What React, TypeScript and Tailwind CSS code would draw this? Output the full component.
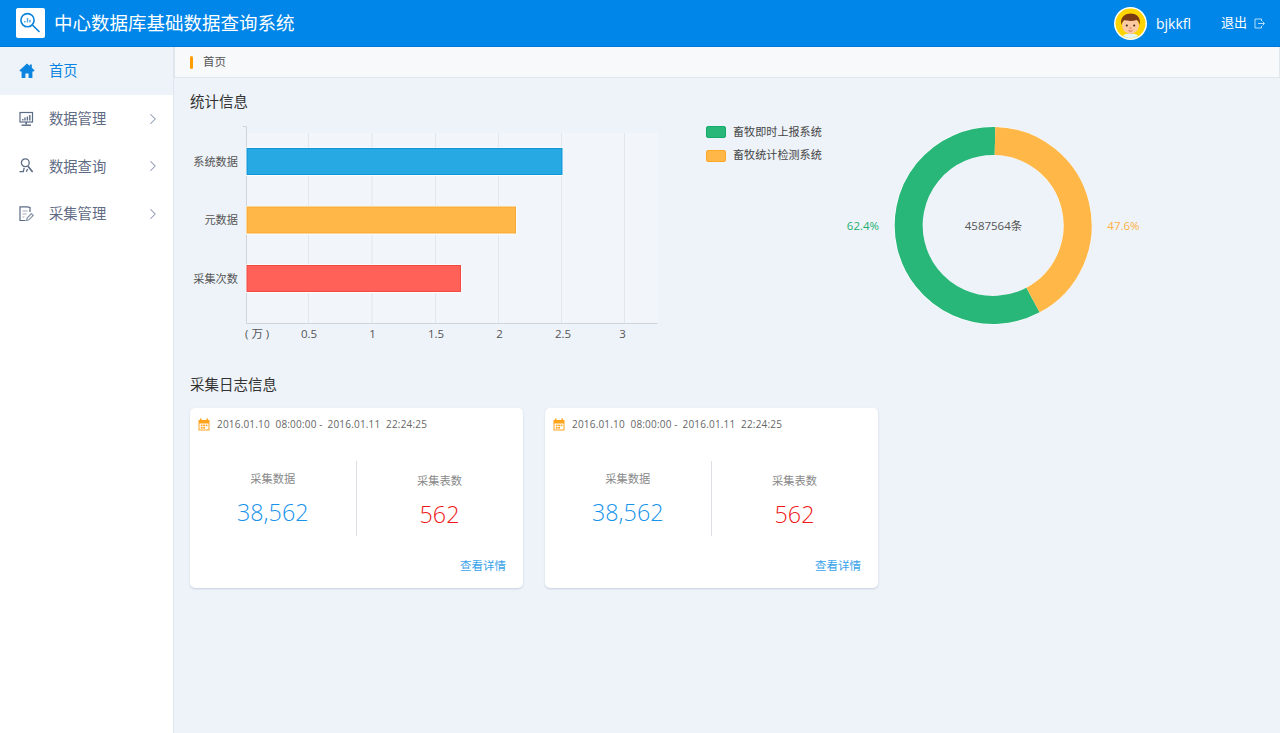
import { ChevronRight } from "lucide-react"

const font = { fontFamily: '"Open Sans", "Noto Sans CJK SC", sans-serif' }

function LogoIcon() {
    return (
        <svg width="24" height="24" viewBox="0 0 24 24" fill="none">
            <circle cx="8.5" cy="9.2" r="6.6" stroke="#0a84dc" strokeWidth="1.6" />
            <path d="M13.4 14 L20 20.5" stroke="#0a84dc" strokeWidth="1.7" strokeLinecap="round" />
            <path d="M5.8 11.5v-1.6M8.5 11.5v-4.4M11 11.5v-2.8" stroke="#4aa6e8" strokeWidth="1.4" />
        </svg>
    )
}

function HomeIcon() {
    return (
        <svg width="16" height="16" viewBox="0 0 16 16" fill="#0a84e0">
            <path d="M8 0.5 L10.8 3 V1.5 H12.8 V4.8 L15.6 7.4 L14.6 8.6 H13.4 V15 H9.6 V10.5 H6.4 V15 H2.6 V8.6 H1.4 L0.4 7.4 Z" />
        </svg>
    )
}

function MonitorIcon() {
    return (
        <svg width="16" height="16" viewBox="0 0 16 16" fill="none" stroke="#5c6b85" strokeWidth="1.2">
            <rect x="1" y="1.5" width="12.5" height="9.5" />
            <path d="M7.2 11v2.5" strokeWidth="1.6" />
            <path d="M2.5 14.2h9.5" strokeWidth="1.4" />
            <path d="M3.8 9.5v-1.5M6 9.5v-3M8.4 9.5v-4M10.8 9.5v-5.5" strokeWidth="1.4" />
        </svg>
    )
}

function SearchUserIcon() {
    return (
        <svg width="16" height="16" viewBox="0 0 16 16" fill="none" stroke="#5c6b85" strokeWidth="1.3">
            <circle cx="6.3" cy="4.8" r="3.9" />
            <path d="M9 8.2 L13.6 14" strokeWidth="1.7" />
            <path d="M0.5 13.6H4.3L5.2 9.8" />
            <path d="M7.3 13.6 L8.6 11" />
        </svg>
    )
}

function EditDocIcon() {
    return (
        <svg width="16" height="16" viewBox="0 0 16 16" fill="none" stroke="#5c6b85" strokeWidth="1.2">
            <path d="M11 6V1.5L8 0.8H1V14.5H6.5" />
            <path d="M3.5 5h5M3.5 8h4M3.5 11h2" stroke="#a3acbc" />
            <path d="M7.5 14.5 L8.1 12 L12.4 7.7 L14.2 9.5 L9.9 13.8 Z" stroke="#8793a8" />
        </svg>
    )
}

function LogoutIcon() {
    return (
        <svg width="11" height="11" viewBox="0 0 11 11" fill="none" stroke="#b5dcf8" strokeWidth="1">
            <path d="M7.5 3V1H1v9h6.5V8" />
            <path d="M4 5.5h6.5M8.5 3.5l2 2-2 2" />
        </svg>
    )
}

function CalendarIcon() {
    return (
        <svg width="12" height="13" viewBox="0 0 12 13" fill="#ffa31a">
            <path d="M0.5 2H2V0.5H3.5V2H8.5V0.5H10V2H11.5V12.5H0.5ZM1.5 5.5V11.5H10.5V5.5Z" />
            <rect x="2.8" y="6.6" width="1.8" height="1.6" />
            <rect x="5.2" y="6.6" width="1.8" height="1.6" />
            <rect x="7.6" y="6.6" width="1.8" height="1.6" />
            <rect x="2.8" y="9" width="1.8" height="1.6" />
            <rect x="5.2" y="9" width="1.8" height="1.6" />
        </svg>
    )
}

function Avatar() {
    return (
        <svg width="33" height="33" viewBox="0 0 33 33">
            <circle cx="16.5" cy="16.5" r="16.5" fill="#fff" />
            <circle cx="16.5" cy="16.5" r="15" fill="#ffd400" />
            <path d="M9 29 C10 25.5 23 25.5 24 29 A15 15 0 0 1 9 29Z" fill="#e3f5f8" />
            <rect x="14" y="23" width="5" height="4" fill="#f3bd95" />
            <ellipse cx="16.5" cy="18.5" rx="8.5" ry="8.2" fill="#fbc9a2" />
            <path d="M7.2 18 C5.8 9 12 6.5 16.5 6.5 C21.5 6.5 27.2 9 25.8 18 C25 15 24 13.5 22.5 13 C18.5 14.5 13 14 10.8 13 C9 14 8 15.5 7.2 18Z" fill="#7a3a13" />
            <circle cx="12.8" cy="18.5" r="1" fill="#3b2314" />
            <circle cx="20.2" cy="18.5" r="1" fill="#3b2314" />
            <ellipse cx="16.5" cy="21" rx="1.3" ry="1" fill="#ee9b7c" />
            <path d="M14.6 23.6 Q16.5 25 18.4 23.6" stroke="#c7533a" strokeWidth="0.8" fill="none" />
        </svg>
    )
}

function Header() {
    return (
        <header className="h-[47px] shrink-0 bg-[#0086e8] border-b border-[#0277d6] flex items-center pl-4 pr-[15px] text-white">
            <div className="w-[29px] h-[30px] bg-white rounded-[2px] flex items-center justify-center">
                <LogoIcon />
            </div>
            <h1 className="ml-[9px] text-[18.5px] leading-none whitespace-nowrap">中心数据库基础数据查询系统</h1>
            <div className="ml-auto flex items-center">
                <span className="mt-[1px]"><Avatar /></span>
                <span className="ml-[9px] text-[14px] w-[65px]">bjkkfl</span>
                <span className="text-[13px]">退出</span>
                <span className="ml-[7px] mt-[1px]"><LogoutIcon /></span>
            </div>
        </header>
    )
}

const menu = [
    { label: "数据管理", icon: <MonitorIcon /> },
    { label: "数据查询", icon: <SearchUserIcon /> },
    { label: "采集管理", icon: <EditDocIcon /> },
]

function Sidebar() {
    return (
        <aside className="w-[174px] shrink-0 bg-white border-r border-[#dde5ee]">
            <div className="h-[48px] bg-[#eef3f9] flex items-center pl-[19px] text-[#0a84e0] text-[14.3px]">
                <HomeIcon />
                <span className="ml-[14px]">首页</span>
            </div>
            {menu.map((item) => (
                <div key={item.label} className="h-[47.5px] flex items-center pl-[19px] text-[#5f6b85] text-[14.3px]">
                    {item.icon}
                    <span className="ml-[14px]">{item.label}</span>
                    <ChevronRight className="ml-auto mr-[11px]" size={18} strokeWidth={1.4} color="#8895b0" />
                </div>
            ))}
        </aside>
    )
}

function BarChart() {
    const grid = [308.5, 372, 435.5, 498.5, 561.5, 624.5]
    const bars = [
        { y: 148.5, x2: 562, fill: "#27a9e3", stroke: "#0f94d8", label: "系统数据", ly: 162 },
        { y: 207, x2: 515.5, fill: "#ffb748", stroke: "#f7a935", label: "元数据", ly: 220 },
        { y: 265.5, x2: 460.5, fill: "#ff6058", stroke: "#f04a43", label: "采集次数", ly: 279 },
    ]
    const ticks = [
        { t: "0.5", x: 309 },
        { t: "1", x: 372.5 },
        { t: "1.5", x: 436 },
        { t: "2", x: 499.5 },
        { t: "2.5", x: 563 },
        { t: "3", x: 622.5 },
    ]
    return (
        <svg width="470" height="230" viewBox="190 120 470 230" className="shrink-0" style={font}>
            <rect x="247" y="133" width="411" height="190" fill="#f2f6fa" />
            {grid.map((x) => (
                <line key={x} x1={x} x2={x} y1="133" y2="323" stroke="#e3e8ee" />
            ))}
            <path d="M243 126.5H246.5V323.5H657.5" fill="none" stroke="#cfd4da" />
            {bars.map((b) => (
                <g key={b.label}>
                    <rect x="246" y={b.y - 1} width={b.x2 - 245} height="28.5" fill="#fff" />
                    <rect x="247" y={b.y} width={b.x2 - 247} height="26" fill={b.fill} stroke={b.stroke} />
                    <text x="238" y={b.ly + 4} textAnchor="end" fontSize="11.2" fill="#555">{b.label}</text>
                </g>
            ))}
            <text x="245" y="338" fontSize="11.5" fill="#555" xmlSpace="preserve">( 万 )</text>
            {ticks.map((t) => (
                <text key={t.t} x={t.x} y="338" textAnchor="middle" fontSize="11.5" fill="#555">{t.t}</text>
            ))}
        </svg>
    )
}

function Donut() {
    return (
        <svg width="310" height="230" viewBox="840 120 310 230" className="shrink-0" style={font}>
            <circle cx="993" cy="225.5" r="99" fill="#fff" />
            <circle cx="993" cy="225.5" r="70.5" fill="#eef3f9" />
            <path d="M995 141 A84.5 84.5 0 1 0 1033 300" fill="none" stroke="#28b779" strokeWidth="28" />
            <path d="M995 141 A84.5 84.5 0 0 1 1033 300" fill="none" stroke="#ffb748" strokeWidth="28" />
            <text x="993.5" y="230" textAnchor="middle" fontSize="11.5" fill="#555">4587564条</text>
            <text x="863" y="230" textAnchor="middle" fontSize="11.5" fill="#1fae72">62.4%</text>
            <text x="1123.5" y="230" textAnchor="middle" fontSize="11.5" fill="#ffb142">47.6%</text>
        </svg>
    )
}

function Legend() {
    const items = [
        { label: "畜牧即时上报系统", color: "bg-[#28b779] border-[#14ab6b]" },
        { label: "畜牧统计检测系统", color: "bg-[#ffb748] border-[#ffa726]" },
    ]
    return (
        <div className="w-[134px] ml-[46px] shrink-0 pt-[5px] flex flex-col gap-[9.5px]">
            {items.map((it) => (
                <div key={it.label} className="flex items-center h-[14px] whitespace-nowrap">
                    <span className={`w-[20px] h-[12px] rounded-[2px] border ${it.color}`} />
                    <span className="ml-[7px] text-[11.1px] text-[#444]">{it.label}</span>
                </div>
            ))}
        </div>
    )
}

function LogCard() {
    return (
        <div className="w-[332.5px] h-[180px] bg-white rounded-[5px] shadow-[0_1px_2px_rgba(120,140,170,0.35)] flex flex-col">
            <div className="flex items-center pl-[8px] pt-[9px] h-[24px]">
                <CalendarIcon />
                <span className="ml-[7px] text-[10px] text-[#666] whitespace-pre tracking-[0.19px]">2016.01.10  08:00:00 -<span className="ml-[2px]"> 2016.01.11  22:24:25</span></span>
            </div>
            <div className="mt-[29px] h-[75px] flex">
                <div className="w-[166.5px] border-r border-[#dcdfe3] flex flex-col items-center pt-[9px]">
                    <span className="text-[11.25px] text-[#888] leading-[18px]">采集数据</span>
                    <span className="mt-[8px] text-[23.3px] font-light leading-[32px] text-[#1893ea]">38,562</span>
                </div>
                <div className="flex-1 flex flex-col items-center pt-[11px]">
                    <span className="text-[11.25px] text-[#888] leading-[18px]">采集表数</span>
                    <span className="mt-[8px] text-[23.3px] font-light leading-[32px] text-[#f01818]">562</span>
                </div>
            </div>
            <a className="mt-[21px] mr-[16.5px] self-end text-[11.5px] leading-[18px] text-[#3aa3ea]">查看详情</a>
        </div>
    )
}

export default function App() {
    return (
        <div className="h-[733px] flex flex-col overflow-hidden bg-[#eef3f9]" style={font}>
            <Header />
            <div className="flex flex-1 min-h-0">
                <Sidebar />
                <main className="flex-1 min-w-0">
                    <div className="h-[31px] bg-[#f7f9fb] border border-t-0 border-[#dfe6ec] flex items-center pl-[15px] text-[11.5px] text-[#555]">
                        <span className="w-[3px] h-[13px] rounded-full bg-[#ff9c00]" />
                        <span className="ml-[10px]">首页</span>
                    </div>
                    <div className="pl-[16px]">
                        <h2 className="mt-[14px] h-[20px] text-[14.5px] leading-[20px] text-[#333]">统计信息</h2>
                        <div className="mt-[8px] flex">
                            <BarChart />
                            <Legend />
                            <Donut />
                        </div>
                        <h2 className="mt-[25px] h-[20px] text-[14.5px] leading-[20px] text-[#333]">采集日志信息</h2>
                        <div className="mt-[13px] flex gap-[22.5px]">
                            <LogCard />
                            <LogCard />
                        </div>
                    </div>
                </main>
            </div>
        </div>
    )
}
